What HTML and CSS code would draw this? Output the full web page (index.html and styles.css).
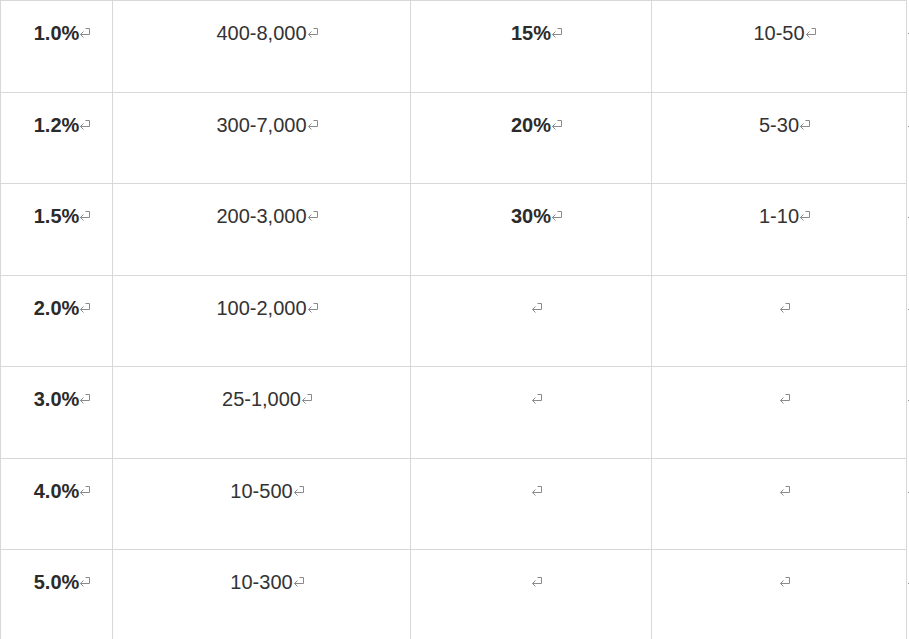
FILE: index.html
```html
<!DOCTYPE html>
<html lang="zh">
<head>
<meta charset="utf-8">
<title>Table</title>
<link rel="stylesheet" href="styles.css">
</head>
<body>
<div class="grid">
  <div class="cell first top"><b>1.0%</b><svg class="pm" viewBox="0 0 12 11"><path d="M6.5 1.5H10.5V7.5H1.5M4.5 4.5L1.5 7.5L4.5 10.5"/></svg></div>
  <div class="cell top">400-8,000<svg class="pm" viewBox="0 0 12 11"><path d="M6.5 1.5H10.5V7.5H1.5M4.5 4.5L1.5 7.5L4.5 10.5"/></svg></div>
  <div class="cell top"><b>15%</b><svg class="pm" viewBox="0 0 12 11"><path d="M6.5 1.5H10.5V7.5H1.5M4.5 4.5L1.5 7.5L4.5 10.5"/></svg></div>
  <div class="cell top">10-50<svg class="pm" viewBox="0 0 12 11"><path d="M6.5 1.5H10.5V7.5H1.5M4.5 4.5L1.5 7.5L4.5 10.5"/></svg></div>
  <div class="end"><svg class="pm" viewBox="0 0 12 11"><path d="M6.5 1.5H10.5V7.5H1.5M4.5 4.5L1.5 7.5L4.5 10.5"/></svg></div>

  <div class="cell first"><b>1.2%</b><svg class="pm" viewBox="0 0 12 11"><path d="M6.5 1.5H10.5V7.5H1.5M4.5 4.5L1.5 7.5L4.5 10.5"/></svg></div>
  <div class="cell">300-7,000<svg class="pm" viewBox="0 0 12 11"><path d="M6.5 1.5H10.5V7.5H1.5M4.5 4.5L1.5 7.5L4.5 10.5"/></svg></div>
  <div class="cell"><b>20%</b><svg class="pm" viewBox="0 0 12 11"><path d="M6.5 1.5H10.5V7.5H1.5M4.5 4.5L1.5 7.5L4.5 10.5"/></svg></div>
  <div class="cell">5-30<svg class="pm" viewBox="0 0 12 11"><path d="M6.5 1.5H10.5V7.5H1.5M4.5 4.5L1.5 7.5L4.5 10.5"/></svg></div>
  <div class="end"><svg class="pm" viewBox="0 0 12 11"><path d="M6.5 1.5H10.5V7.5H1.5M4.5 4.5L1.5 7.5L4.5 10.5"/></svg></div>

  <div class="cell first"><b>1.5%</b><svg class="pm" viewBox="0 0 12 11"><path d="M6.5 1.5H10.5V7.5H1.5M4.5 4.5L1.5 7.5L4.5 10.5"/></svg></div>
  <div class="cell">200-3,000<svg class="pm" viewBox="0 0 12 11"><path d="M6.5 1.5H10.5V7.5H1.5M4.5 4.5L1.5 7.5L4.5 10.5"/></svg></div>
  <div class="cell"><b>30%</b><svg class="pm" viewBox="0 0 12 11"><path d="M6.5 1.5H10.5V7.5H1.5M4.5 4.5L1.5 7.5L4.5 10.5"/></svg></div>
  <div class="cell">1-10<svg class="pm" viewBox="0 0 12 11"><path d="M6.5 1.5H10.5V7.5H1.5M4.5 4.5L1.5 7.5L4.5 10.5"/></svg></div>
  <div class="end"><svg class="pm" viewBox="0 0 12 11"><path d="M6.5 1.5H10.5V7.5H1.5M4.5 4.5L1.5 7.5L4.5 10.5"/></svg></div>

  <div class="cell first"><b>2.0%</b><svg class="pm" viewBox="0 0 12 11"><path d="M6.5 1.5H10.5V7.5H1.5M4.5 4.5L1.5 7.5L4.5 10.5"/></svg></div>
  <div class="cell">100-2,000<svg class="pm" viewBox="0 0 12 11"><path d="M6.5 1.5H10.5V7.5H1.5M4.5 4.5L1.5 7.5L4.5 10.5"/></svg></div>
  <div class="cell"><svg class="pm" viewBox="0 0 12 11"><path d="M6.5 1.5H10.5V7.5H1.5M4.5 4.5L1.5 7.5L4.5 10.5"/></svg></div>
  <div class="cell"><svg class="pm" viewBox="0 0 12 11"><path d="M6.5 1.5H10.5V7.5H1.5M4.5 4.5L1.5 7.5L4.5 10.5"/></svg></div>
  <div class="end"><svg class="pm" viewBox="0 0 12 11"><path d="M6.5 1.5H10.5V7.5H1.5M4.5 4.5L1.5 7.5L4.5 10.5"/></svg></div>

  <div class="cell first"><b>3.0%</b><svg class="pm" viewBox="0 0 12 11"><path d="M6.5 1.5H10.5V7.5H1.5M4.5 4.5L1.5 7.5L4.5 10.5"/></svg></div>
  <div class="cell">25-1,000<svg class="pm" viewBox="0 0 12 11"><path d="M6.5 1.5H10.5V7.5H1.5M4.5 4.5L1.5 7.5L4.5 10.5"/></svg></div>
  <div class="cell"><svg class="pm" viewBox="0 0 12 11"><path d="M6.5 1.5H10.5V7.5H1.5M4.5 4.5L1.5 7.5L4.5 10.5"/></svg></div>
  <div class="cell"><svg class="pm" viewBox="0 0 12 11"><path d="M6.5 1.5H10.5V7.5H1.5M4.5 4.5L1.5 7.5L4.5 10.5"/></svg></div>
  <div class="end"><svg class="pm" viewBox="0 0 12 11"><path d="M6.5 1.5H10.5V7.5H1.5M4.5 4.5L1.5 7.5L4.5 10.5"/></svg></div>

  <div class="cell first"><b>4.0%</b><svg class="pm" viewBox="0 0 12 11"><path d="M6.5 1.5H10.5V7.5H1.5M4.5 4.5L1.5 7.5L4.5 10.5"/></svg></div>
  <div class="cell">10-500<svg class="pm" viewBox="0 0 12 11"><path d="M6.5 1.5H10.5V7.5H1.5M4.5 4.5L1.5 7.5L4.5 10.5"/></svg></div>
  <div class="cell"><svg class="pm" viewBox="0 0 12 11"><path d="M6.5 1.5H10.5V7.5H1.5M4.5 4.5L1.5 7.5L4.5 10.5"/></svg></div>
  <div class="cell"><svg class="pm" viewBox="0 0 12 11"><path d="M6.5 1.5H10.5V7.5H1.5M4.5 4.5L1.5 7.5L4.5 10.5"/></svg></div>
  <div class="end"><svg class="pm" viewBox="0 0 12 11"><path d="M6.5 1.5H10.5V7.5H1.5M4.5 4.5L1.5 7.5L4.5 10.5"/></svg></div>

  <div class="cell first"><b>5.0%</b><svg class="pm" viewBox="0 0 12 11"><path d="M6.5 1.5H10.5V7.5H1.5M4.5 4.5L1.5 7.5L4.5 10.5"/></svg></div>
  <div class="cell">10-300<svg class="pm" viewBox="0 0 12 11"><path d="M6.5 1.5H10.5V7.5H1.5M4.5 4.5L1.5 7.5L4.5 10.5"/></svg></div>
  <div class="cell"><svg class="pm" viewBox="0 0 12 11"><path d="M6.5 1.5H10.5V7.5H1.5M4.5 4.5L1.5 7.5L4.5 10.5"/></svg></div>
  <div class="cell"><svg class="pm" viewBox="0 0 12 11"><path d="M6.5 1.5H10.5V7.5H1.5M4.5 4.5L1.5 7.5L4.5 10.5"/></svg></div>
  <div class="end"><svg class="pm" viewBox="0 0 12 11"><path d="M6.5 1.5H10.5V7.5H1.5M4.5 4.5L1.5 7.5L4.5 10.5"/></svg></div>
</div>
</body>
</html>
```
FILE: styles.css
```css
html, body {
  margin: 0;
  padding: 0;
  background: #ffffff;
  overflow: hidden;
}

body {
  width: 909px;
  height: 639px;
  font-family: "Liberation Sans", Arial, sans-serif;
  font-size: 20px;
  color: #333333;
}

.grid {
  display: grid;
  grid-template-columns: 113px 298px 241px 255px 20px;
  grid-template-rows: 93px 91px 92px 91px 92px 91px 92px;
  width: 927px;
}

.cell {
  box-sizing: border-box;
  border-right: 1px solid #d8d8d8;
  border-bottom: 1px solid #d8d8d8;
  padding-top: 17px;
  line-height: 30px;
  text-align: center;
  white-space: nowrap;
}

.cell.top {
  border-top: 1px solid #d8d8d8;
}

.cell.first {
  border-left: 1px solid #d8d8d8;
}

.cell b {
  font-weight: 700;
  color: #2b2b2b;
}

.end {
  padding-top: 17px;
  line-height: 30px;
  text-align: left;
}

.pm {
  display: inline-block;
  width: 12px;
  height: 11px;
  margin-left: 0;
  margin-right: -12px;
  vertical-align: 2px;
  fill: none;
  stroke: #8a8a8a;
  stroke-width: 1;
}

.end .pm {
  margin-right: 0;
}
```
